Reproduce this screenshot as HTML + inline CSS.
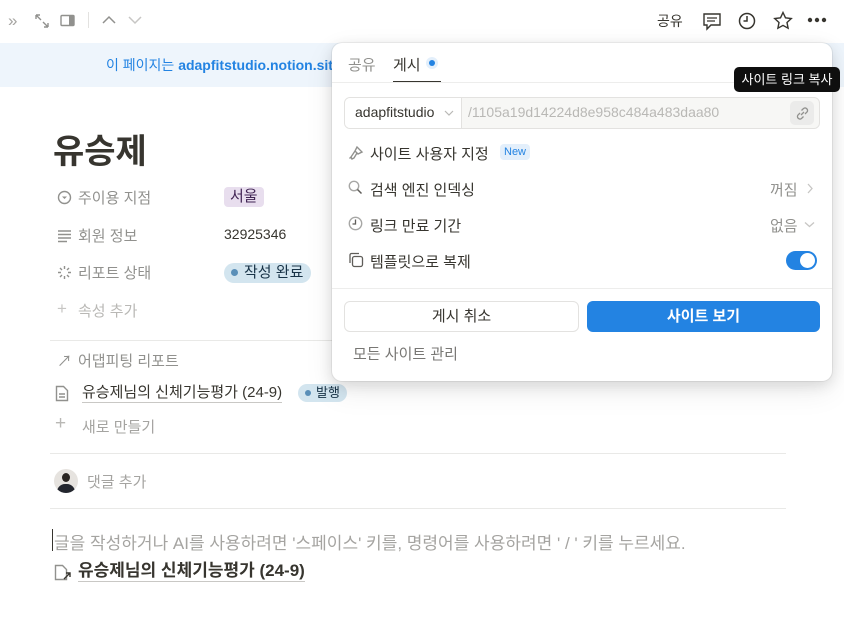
<!DOCTYPE html>
<html><head><meta charset="utf-8"><style>
*{box-sizing:border-box;margin:0;padding:0}
body{width:844px;height:623px;overflow:hidden;background:#fff;font-family:"Liberation Sans","Noto Sans CJK KR",sans-serif;color:#37352f;position:relative;font-size:15px}
.abs{position:absolute}
.ic{stroke:#91918e;fill:none;stroke-width:1.4}
.gray{color:#91918e}
.line{position:absolute;left:50px;width:736px;height:1px;background:#e9e9e7}
.pill{position:absolute;border-radius:4px;padding:0 6px;font-size:15px;line-height:20px}
.pop{position:absolute;left:332px;top:43px;width:500px;height:338px;background:#fff;border-radius:10px;box-shadow:0 0 0 1px rgba(15,15,15,.06),0 4px 14px rgba(15,15,15,.12),0 10px 30px rgba(15,15,15,.08)}
.row{position:absolute;left:14px;font-size:15px;color:#37352f}
</style></head><body>
<div class="abs" style="left:8px;top:11px;font-size:17px;color:#a5a4a1">»</div>
<svg class="abs" style="left:34px;top:13px" width="16" height="16"><path class="ic" d="M2 2l5 5M2 2v4M2 2h4M14 14l-5-5M14 14v-4M14 14h-4"/></svg>
<svg class="abs" style="left:60px;top:14px" width="16" height="14"><rect class="ic" x="1" y="1.5" width="13" height="10" rx="1"/><rect x="9" y="2" width="5" height="9" fill="#91918e"/></svg>
<div class="abs" style="left:88px;top:12px;width:1px;height:16px;background:#e3e2e0"></div>
<svg class="abs" style="left:101px;top:14px" width="16" height="12"><path d="M2 9l6-6 6 6" stroke="#91918e" stroke-width="1.5" fill="none"/></svg>
<svg class="abs" style="left:127px;top:14px" width="16" height="12"><path d="M2 3l6 6 6-6" stroke="#c7c6c4" stroke-width="1.5" fill="none"/></svg>
<div class="abs" style="left:657px;top:11px;font-size:14px">공유</div>
<svg class="abs" style="left:702px;top:12px" width="20" height="19"><path d="M2 2h16v11H9l-4 4v-4H2z" stroke="#37352f" stroke-width="1.4" fill="none"/><path d="M5 6h10M5 9h8" stroke="#37352f" stroke-width="1.3"/></svg>
<svg class="abs" style="left:738px;top:12px" width="18" height="18"><circle cx="9" cy="9" r="7.5" stroke="#37352f" stroke-width="1.5" fill="none"/><path d="M9 4v5H5.5" stroke="#37352f" stroke-width="1.5" fill="none"/></svg>
<svg class="abs" style="left:773px;top:11px" width="20" height="19"><path d="M10 1.5l2.5 5.3 5.8.7-4.3 4 1.1 5.7L10 14.4l-5.1 2.8L6 11.5 1.7 7.5l5.8-.7z" stroke="#37352f" stroke-width="1.4" fill="none"/></svg>
<svg class="abs" style="left:807px;top:17px" width="20" height="6"><circle cx="3" cy="3" r="2.2" fill="#37352f"/><circle cx="10" cy="3" r="2.2" fill="#37352f"/><circle cx="17" cy="3" r="2.2" fill="#37352f"/></svg>
<div class="abs" style="left:0;top:43px;width:844px;height:44px;background:#eef5fc"></div>
<div class="abs" style="left:106px;top:55px;font-size:14px;color:#2383e2">이 페이지는 <b>adapfitstudio.notion.site</b></div>
<div class="abs" style="left:53px;top:124px;font-size:34px;font-weight:bold;color:#37352f">유승제</div>
<svg class="abs" style="left:57px;top:190px" width="15" height="15"><circle class="ic" cx="7.5" cy="7.5" r="6"/><path d="M5 6.5l2.5 2.5 2.5-2.5z" fill="#91918e"/></svg>
<div class="abs gray" style="left:78px;top:187px">주이용 지점</div>
<div class="pill" style="left:224px;top:187px;background:#e8deee;color:#412454">서울</div>
<svg class="abs" style="left:57px;top:228px" width="15" height="15"><path class="ic" d="M1 3h13M1 6.5h13M1 10h13M1 13.5h9"/></svg>
<div class="abs gray" style="left:78px;top:225px">회원 정보</div>
<div class="abs" style="left:224px;top:226px;font-size:14px">32925346</div>
<svg class="abs" style="left:57px;top:265px" width="15" height="15"><g stroke="#91918e" stroke-width="1.4"><path d="M7.5 1v3M7.5 11v3M1 7.5h3M11 7.5h3M3 3l2 2M10 10l2 2M3 12l2-2M10 5l2-2"/></g></svg>
<div class="abs gray" style="left:78px;top:262px">리포트 상태</div>
<div class="pill" style="left:224px;top:263px;background:#d3e5ef;color:#183347;border-radius:10px;padding:0 8px 0 7px"><span style="display:inline-block;width:7px;height:7px;border-radius:50%;background:#5a8fb8;margin-right:6px;vertical-align:1px"></span>작성 완료</div>
<div class="abs" style="left:57px;top:299px;font-size:17px;color:#c7c6c4">+</div>
<div class="abs" style="left:78px;top:300px;color:#b9b8b5">속성 추가</div>
<div class="line" style="top:340px"></div>
<div class="abs gray" style="left:57px;top:350px;font-size:15px">↗</div>
<div class="abs gray" style="left:78px;top:350px">어댑피팅 리포트</div>
<svg class="abs" style="left:55px;top:385px" width="14" height="17"><path class="ic" d="M1.5 1.5h7l4 4v10h-11z"/><path class="ic" d="M4 9h6M4 12h6" stroke-width="1"/></svg>
<div class="abs" style="left:82px;top:383px;border-bottom:1px solid #c9c8c5;line-height:19px">유승제님의 신체기능평가 (24-9)</div>
<div class="pill" style="left:298px;top:384px;background:#d3e5ef;color:#183347;border-radius:10px;font-size:13px;line-height:18px;padding:0 7px"><span style="display:inline-block;width:6px;height:6px;border-radius:50%;background:#5a8fb8;margin-right:5px;vertical-align:1px"></span>발행</div>
<div class="abs" style="left:55px;top:413px;font-size:19px;color:#b9b8b5">+</div>
<div class="abs" style="left:82px;top:416px;color:#a5a4a1">새로 만들기</div>
<div class="line" style="top:453px"></div>
<div class="abs" style="left:54px;top:469px;width:24px;height:24px;border-radius:50%;background:#e6e3df;overflow:hidden"><div style="position:absolute;left:8px;top:4px;width:8px;height:9px;border-radius:50%;background:#2a2522"></div><div style="position:absolute;left:3px;top:15px;width:18px;height:12px;border-radius:8px 8px 0 0;background:#23262e"></div></div>
<div class="abs" style="left:87px;top:471px;color:#a5a4a1">댓글 추가</div>
<div class="line" style="top:508px"></div>
<div class="abs" style="left:52px;top:529px;width:1px;height:22px;background:#37352f"></div>
<div class="abs" style="left:54px;top:529px;font-size:17px;color:#a5a4a1;white-space:nowrap">글을 작성하거나 AI를 사용하려면 '스페이스' 키를, 명령어를 사용하려면 ' / ' 키를 누르세요.</div>
<svg class="abs" style="left:54px;top:564px" width="20" height="17"><path class="ic" d="M1.5 1.5h7l4 4v10h-11z"/><path d="M10 15l6-6M12 9h4v4" stroke="#37352f" stroke-width="1.4" fill="none"/></svg>
<div class="abs" style="left:78px;top:561px;font-size:17px;font-weight:bold;border-bottom:1px solid #c9c8c5;line-height:20px">유승제님의 신체기능평가 (24-9)</div>
<div class="pop">
 <div class="abs" style="left:16px;top:11px;color:#91918e">공유</div>
 <div class="abs" style="left:61px;top:11px;color:#37352f">게시</div>
 <div class="abs" style="left:94px;top:14px;width:12px;height:12px;border-radius:50%;background:#e3effb"><div style="margin:3px;width:6px;height:6px;border-radius:50%;background:#2383e2"></div></div>
 <div class="abs" style="left:61px;top:38px;width:48px;height:2px;background:#37352f"></div>
 <div class="abs" style="left:0;top:39px;width:500px;height:1px;background:#ededec"></div>
 <div class="abs" style="left:12px;top:54px;width:476px;height:32px;border:1px solid #e3e2e0;border-radius:6px;background:#f7f7f5;overflow:hidden">
  <div style="position:absolute;left:0;top:0;width:117px;height:30px;background:#fff;border-right:1px solid #e3e2e0"></div>
  <div style="position:absolute;left:10px;top:6px;font-size:14px;color:#37352f">adapfitstudio</div>
  <svg style="position:absolute;left:99px;top:12px" width="10" height="7"><path d="M1 1l4 4 4-4" stroke="#b9b8b5" stroke-width="1.2" fill="none"/></svg>
  <div style="position:absolute;left:123px;top:6px;font-size:14px;color:#b9b8b5">/1105a19d14224d8e958c484a483daa80</div>
  <div style="position:absolute;left:445px;top:3px;width:24px;height:24px;border-radius:5px;background:#ebebea"></div>
  <svg style="position:absolute;left:450px;top:8px" width="15" height="15"><path d="M6 9l3-3M5 7L3 9a2.5 2.5 0 003.5 3.5L8.5 10.5M10 8l2-2a2.5 2.5 0 00-3.5-3.5L6.5 4.5" stroke="#91918e" stroke-width="1.3" fill="none"/></svg>
 </div>
 <svg class="abs" style="left:16px;top:102px" width="16" height="16"><path class="ic" d="M9 2l5 5-4 2-3-3zM7 6L3 12l1 2 2-1 3-5M3 12l-1.5 1.5" stroke-width="1.2"/></svg>
 <div class="row" style="left:38px;top:100px">사이트 사용자 지정</div>
 <div class="abs" style="left:168px;top:101px;background:#e3effb;color:#2383e2;font-size:11px;border-radius:4px;padding:2px 4px">New</div>
 <svg class="abs" style="left:16px;top:137px" width="15" height="15"><circle class="ic" cx="6" cy="6" r="4.7" stroke="#37352f" stroke-opacity=".8"/><path d="M9.5 9.5l4 4" stroke="#37352f" stroke-opacity=".8" stroke-width="1.5"/></svg>
 <div class="row" style="left:38px;top:136px">검색 엔진 인덱싱</div>
 <div class="abs gray" style="left:438px;top:136px">꺼짐</div>
 <svg class="abs" style="left:474px;top:140px" width="8" height="11"><path d="M2 1l4 4.5L2 10" stroke="#c7c6c4" stroke-width="1.3" fill="none"/></svg>
 <svg class="abs" style="left:16px;top:173px" width="15" height="15"><circle class="ic" cx="7.5" cy="7.5" r="6.2" stroke="#37352f" stroke-opacity=".8"/><path d="M7.5 3.5v4.5H4.5" stroke="#37352f" stroke-opacity=".8" stroke-width="1.3" fill="none"/></svg>
 <div class="row" style="left:38px;top:172px">링크 만료 기간</div>
 <div class="abs gray" style="left:438px;top:172px">없음</div>
 <svg class="abs" style="left:472px;top:178px" width="11" height="8"><path d="M1 1.5l4.5 4 4.5-4" stroke="#c7c6c4" stroke-width="1.3" fill="none"/></svg>
 <svg class="abs" style="left:16px;top:209px" width="16" height="16"><rect x="4.5" y="4.5" width="10" height="10" rx="2" stroke="#37352f" stroke-opacity=".8" stroke-width="1.3" fill="none"/><path d="M2 11V3a1.5 1.5 0 011.5-1.5H11" stroke="#37352f" stroke-opacity=".8" stroke-width="1.3" fill="none"/></svg>
 <div class="row" style="left:38px;top:208px">템플릿으로 복제</div>
 <div class="abs" style="left:454px;top:208px;width:31px;height:19px;border-radius:10px;background:#2383e2"><div style="position:absolute;right:2px;top:2px;width:15px;height:15px;border-radius:50%;background:#fff"></div></div>
 <div class="abs" style="left:0;top:245px;width:500px;height:1px;background:#ededec"></div>
 <div class="abs" style="left:12px;top:258px;width:235px;height:31px;border:1px solid #e3e2e0;border-radius:6px;text-align:center;line-height:29px;color:#37352f">게시 취소</div>
 <div class="abs" style="left:255px;top:258px;width:233px;height:31px;border-radius:6px;background:#2383e2;text-align:center;line-height:31px;color:#fff;font-weight:bold">사이트 보기</div>
 <div class="abs" style="left:21px;top:300px;color:#787774">모든 사이트 관리</div>
</div>
<div class="abs" style="left:734px;top:67px;width:106px;height:25px;background:#0f0f0f;border-radius:5px;color:#fff;font-size:13px;line-height:25px;text-align:center">사이트 링크 복사</div>
</body></html>
